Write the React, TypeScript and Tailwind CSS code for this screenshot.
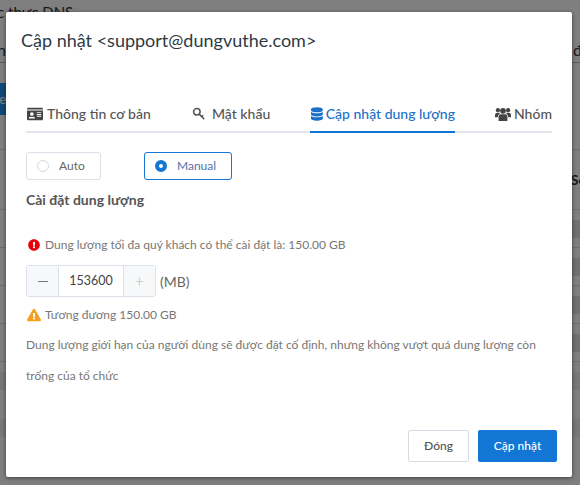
import { FaDatabase, FaExclamationCircle, FaExclamationTriangle, FaIdCard } from "react-icons/fa";

const bandRows = [0, 1, 2, 3];

function Background() {
  return (
    <div className="flex flex-col h-full bg-white text-[#333]">
      <div className="h-[63px] border-b border-[#bbb] overflow-hidden">
        <p className="pt-[2px] text-[15px] leading-[20px] -ml-[20px] whitespace-nowrap">Xác thực DNS</p>
        <div className="flex justify-between text-[16px] leading-[20px] pt-[18px]">
          <span className="-ml-[3px]">n</span>
          <span className="-mr-[2px]">đ</span>
        </div>
      </div>
      <div className="h-[20px]" />
      <div className="h-[67px] border-b border-[#ddd]">
        <div className="w-[40px] h-[32px] -ml-[34px] bg-[#1e90f0] text-white text-[13px] leading-[32px] text-right">e</div>
      </div>
      <div className="h-[60px] border-b border-[#ddd] flex justify-end items-center text-[14px] font-bold">
        <span className="-mr-[6px]">Se</span>
      </div>
      {bandRows.map((n) => (
        <div key={n} className="h-[38px] border-b border-[#ddd] flex items-center justify-end">
          <div className="w-[10px] h-[18px] bg-[#e0e2e6]" />
        </div>
      ))}
      <div className="h-[38px] flex items-center">
        <div className="w-full h-[18px] bg-[#eeeeee]" />
      </div>
      <div className="h-[56px] flex items-center">
        <div className="w-full h-[18px] bg-[#eeeeee]" />
      </div>
    </div>
  );
}

function KeyIcon() {
  return (
    <svg viewBox="0 0 16 16" className="w-[14px] h-[14px]" fill="none" stroke="currentColor" strokeWidth="1.8">
      <circle cx="5.5" cy="5.5" r="3.7" />
      <path d="M8.2 8.2 L14 14 M11 11 L12.8 9.4" />
    </svg>
  );
}

function UsersIcon() {
  return (
    <svg viewBox="0 0 16 14" className="w-[16px] h-[14px] text-[#444]" fill="currentColor">
      <circle cx="8" cy="3.8" r="2.9" />
      <circle cx="2.9" cy="3.2" r="2.1" />
      <circle cx="13.1" cy="3.2" r="2.1" />
      <path d="M3.6 14 V10.2 Q3.6 7.3 6 7.3 H10 Q12.4 7.3 12.4 10.2 V14 Z" />
      <path d="M0 10.2 V8 Q0 5.8 2.4 5.8 H4.2 Q4.6 6.4 5 6.7 Q2.8 7.4 2.7 10.2 Z" />
      <path d="M16 10.2 V8 Q16 5.8 13.6 5.8 H11.8 Q11.4 6.4 11 6.7 Q13.2 7.4 13.3 10.2 Z" />
    </svg>
  );
}

export default function App() {
  return (
    <div className="relative w-[580px] h-[485px] overflow-hidden font-['Lato',sans-serif]">
      <Background />
      <div className="absolute inset-0 bg-black/50" />
      <div className="absolute left-[6px] top-[12px] w-[566px] h-[465px] bg-white rounded-[2px] shadow-[0_1px_4px_rgba(0,0,0,0.5)] flex flex-col px-[20px]">
        <h2 className="-ml-[5px] pt-[16px] text-[18px] leading-[24px] text-[#2f3a45]">Cập nhật &lt;support@dungvuthe.com&gt;</h2>

        <div className="mt-[52px] flex h-[29px] border-b-2 border-[#e0e5ef] text-[14px] font-medium text-[#555] w-[526px] whitespace-nowrap">
          <div className="flex items-center gap-[4px] h-[29px] w-[166px] pb-[10px]">
            <FaIdCard className="text-[16px] ml-[1px] text-[#444]" />
            <span>Thông tin cơ bản</span>
          </div>
          <div className="flex items-center gap-[6px] h-[29px] w-[118px] pb-[10px]">
            <KeyIcon />
            <span>Mật khẩu</span>
          </div>
          <div className="flex items-center gap-[3px] h-[29px] w-[145px] pb-[8px] pl-[1px] border-b-2 border-[#1276d4] text-[#1a6fc9]">
            <FaDatabase className="text-[14px]" />
            <span>Cập nhật dung lượng</span>
          </div>
          <div className="flex items-center gap-[3px] h-[29px] ml-[40px] pb-[10px]">
            <UsersIcon />
            <span>Nhóm</span>
          </div>
        </div>

        <div className="mt-[19px] flex gap-[43px] text-[12px]">
          <div className="w-[75px] h-[28px] border border-[#dbe0ea] rounded-[3px] flex items-center pl-[10px] gap-[10px] text-[#666]">
            <span className="w-[12px] h-[12px] rounded-full border border-[#d5d9e2]" />
            Auto
          </div>
          <div className="w-[88px] h-[28px] border border-[#1276d4] rounded-[3px] flex items-center pl-[10px] gap-[10px] text-[#5b6fa8]">
            <span className="w-[12px] h-[12px] rounded-full border-[4px] border-[#1276d4] bg-white" />
            Manual
          </div>
        </div>

        <h3 className="mt-[10px] text-[14px] leading-[20px] font-bold text-[#555]">Cài đặt dung lượng</h3>

        <div className="mt-[26px] flex items-center gap-[6px] text-[12px] leading-[18px] text-[#777]">
          <FaExclamationCircle className="text-[12px] ml-[2px] text-[#e8000d]" />
          <span className="-ml-[1px]">Dung lượng tối đa quý khách có thể cài đặt là: 150.00 GB</span>
        </div>

        <div className="mt-[11px] flex items-center gap-[4px]">
          <div className="flex w-[130px] h-[32px] border border-[#dbe0ea] rounded-[3px] text-[12.5px] text-[#444]">
            <div className="w-[32px] flex items-center justify-center bg-[#f7f8fa] border-r border-[#dbe0ea]">
              <span className="w-[10px] h-px bg-[#777]" />
            </div>
            <div className="flex-1 flex items-center justify-center">153600</div>
            <div className="w-[32px] flex items-center justify-center bg-[#f7f8fa] border-l border-[#dbe0ea] text-[#bbb] text-[17px] font-light">+</div>
          </div>
          <span className="text-[14px] text-[#666]">(MB)</span>
        </div>

        <div className="mt-[9px] flex items-center gap-[5px] text-[12px] leading-[18px] text-[#777]">
          <FaExclamationTriangle className="text-[14px] ml-[1px] text-[#f2a01e]" />
          <span className="-ml-[1px]">Tương đương 150.00 GB</span>
        </div>

        <p className="mt-[5px] text-[12px] leading-[31px] text-[#777] w-[526px]">
          Dung lượng giới hạn của người dùng sẽ được đặt cố định, nhưng không vượt quá dung lượng còn trống của tổ chức
        </p>

        <div className="-mr-[5px] mt-auto mb-[15px] flex justify-end gap-[9px] text-[12px] font-medium">
          <button className="w-[61px] h-[32px] border border-[#d5dbe5] rounded-[2px] text-[#555]">Đóng</button>
          <button className="w-[79px] h-[32px] bg-[#1276d4] rounded-[2px] text-white">Cập nhật</button>
        </div>
      </div>
    </div>
  );
}
